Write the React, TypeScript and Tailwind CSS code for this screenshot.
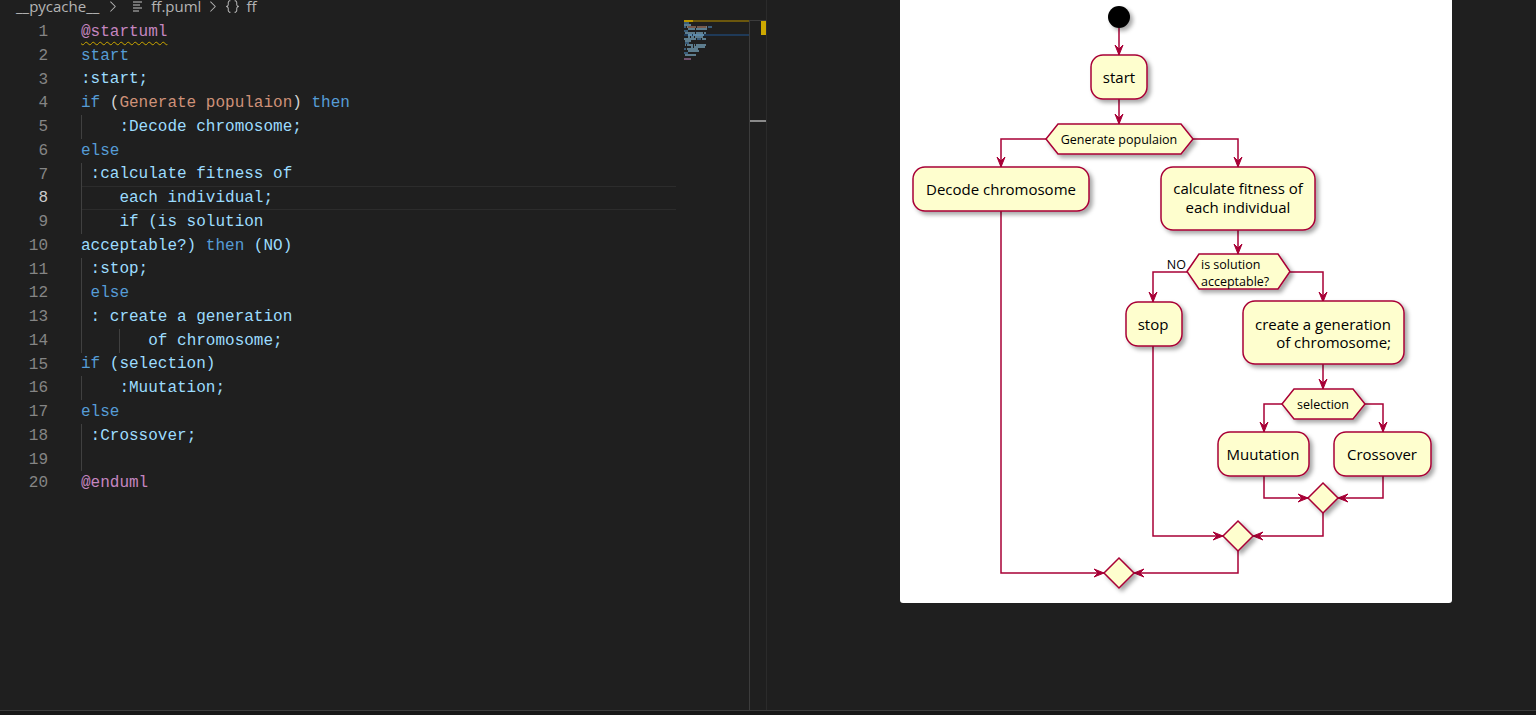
import { VscChevronRight, VscSymbolNamespace } from "react-icons/vsc"

const C = { kw: "#569cd6", lt: "#9cdcfe", pk: "#c586c0", or: "#ce9178", df: "#d4d4d4" }

type Line = { indent: number; tokens: [string, string][]; guide?: boolean; squiggle?: boolean }

const lines: Line[] = [
  { indent: 0, tokens: [["@startuml", C.pk]], squiggle: true },
  { indent: 0, tokens: [["start", C.kw]] },
  { indent: 0, tokens: [[":start;", C.lt]] },
  { indent: 0, tokens: [["if", C.kw], [" (", C.df], ["Generate populaion", C.or], [")", C.df], [" then", C.kw]] },
  { indent: 4, tokens: [[":Decode chromosome;", C.lt]] },
  { indent: 0, tokens: [["else", C.kw]] },
  { indent: 1, tokens: [[":calculate fitness of", C.lt]] },
  { indent: 4, tokens: [["each individual;", C.lt]] },
  { indent: 4, tokens: [["if (is solution", C.lt]] },
  { indent: 0, tokens: [["acceptable?)", C.lt], [" then", C.kw], [" (NO)", C.lt]] },
  { indent: 1, tokens: [[":stop;", C.lt]] },
  { indent: 1, tokens: [["else", C.kw]] },
  { indent: 1, tokens: [[": create a generation", C.lt]] },
  { indent: 7, tokens: [["of chromosome;", C.lt]] },
  { indent: 0, tokens: [["if", C.kw], [" (selection)", C.lt]] },
  { indent: 4, tokens: [[":Muutation;", C.lt]] },
  { indent: 0, tokens: [["else", C.kw]] },
  { indent: 1, tokens: [[":Crossover;", C.lt]] },
  { indent: 1, tokens: [], guide: true },
  { indent: 0, tokens: [["@enduml", C.pk]] },
]

const ACTIVE = 8

function chunks(n: number) {
  const out: number[] = []
  for (let i = 0; i < n; i += 4) out.push(Math.min(4, n - i))
  return out
}

function CodeLine({ line, n }: { line: Line; n: number }) {
  const active = n === ACTIVE
  return (
    <div className="flex h-[23.75px] items-stretch">
      <div className={`w-[48px] text-right ${active ? "text-[#cccccc]" : "text-[#858585]"}`}>{n}</div>
      <div className="w-[33px]" />
      <div
        className={`flex w-[595px] items-stretch whitespace-pre ${
          active ? "shadow-[inset_0_1px_0_#2c2c2c,inset_0_-1px_0_#2c2c2c]" : ""
        }`}
      >
        {chunks(line.indent).map((s, i) => (
          <span key={i} className="shadow-[inset_1px_0_0_#404040]">
            {" ".repeat(s)}
          </span>
        ))}
        <span className="self-center">
          {line.tokens.map(([t, c], i) => (
            <span
              key={i}
              style={{ color: c }}
              className={line.squiggle ? "underline decoration-wavy decoration-[#cca700] decoration-1 underline-offset-[5px]" : ""}
            >
              {t}
            </span>
          ))}
        </span>
      </div>
    </div>
  )
}

function MiniRow({ line, n }: { line: Line; n: number }) {
  const parts: { w: number; c: string; gap?: boolean }[] = []
  if (line.indent) parts.push({ w: line.indent, c: "", gap: true })
  line.tokens.forEach(([t, c]) => {
    t.split(/( +)/).forEach((seg) => {
      if (!seg) return
      parts.push({ w: seg.length, c, gap: seg.trim() === "" })
    })
  })
  return (
    <div className={`flex h-[2px] items-stretch ${n === ACTIVE ? "bg-[#1f3a58]" : ""}`}>
      {parts.map((p, i) => (
        <div
          key={i}
          className="opacity-50"
          style={{ width: p.w, backgroundColor: p.gap ? "transparent" : p.c }}
        />
      ))}
    </div>
  )
}

const RED = "#a80036"
const FILL = "#fefece"
const TF = "'Open Sans', 'DejaVu Sans', sans-serif"

function Head({ x, y, d }: { x: number; y: number; d: "down" | "left" | "right" }) {
  const pts =
    d === "down"
      ? `${x - 4},${y - 10} ${x},${y} ${x + 4},${y - 10} ${x},${y - 6}`
      : d === "right"
      ? `${x - 10},${y - 4} ${x},${y} ${x - 10},${y + 4} ${x - 6},${y}`
      : `${x + 10},${y - 4} ${x},${y} ${x + 10},${y + 4} ${x + 6},${y}`
  return <polygon points={pts} fill={RED} stroke={RED} strokeWidth={1} />
}

function Box({ x, y, w, h }: { x: number; y: number; w: number; h: number }) {
  return <rect x={x} y={y} width={w} height={h} rx={12} fill={FILL} stroke={RED} strokeWidth={1.5} filter="url(#sh)" />
}

function Hex({ x1, x2, y1, y2 }: { x1: number; x2: number; y1: number; y2: number }) {
  const m = (y1 + y2) / 2
  return (
    <polygon
      points={`${x1},${m} ${x1 + 12},${y1} ${x2 - 12},${y1} ${x2},${m} ${x2 - 12},${y2} ${x1 + 12},${y2}`}
      fill={FILL}
      stroke={RED}
      strokeWidth={1.5}
      filter="url(#sh)"
    />
  )
}

function Diamond({ cx, cy }: { cx: number; cy: number }) {
  return (
    <polygon
      points={`${cx},${cy - 15} ${cx + 15},${cy} ${cx},${cy + 15} ${cx - 15},${cy}`}
      fill={FILL}
      stroke={RED}
      strokeWidth={1.5}
      filter="url(#sh)"
    />
  )
}

function Diagram() {
  const ln = { fill: "none", stroke: RED, strokeWidth: 1.5 }
  return (
    <svg width={552} height={603} viewBox="0 0 552 603">
      <defs>
        <filter id="sh" x="-20%" y="-20%" width="150%" height="150%">
          <feDropShadow dx="3" dy="3" stdDeviation="2" floodColor="#000" floodOpacity="0.35" />
        </filter>
      </defs>
      {/* connectors */}
      <polyline points="219,28 219,55" {...ln} />
      <Head x={219} y={55} d="down" />
      <polyline points="219,99 219,124" {...ln} />
      <Head x={219} y={124} d="down" />
      <polyline points="146,139 101,139 101,167" {...ln} />
      <Head x={101} y={167} d="down" />
      <polyline points="293,139 338,139 338,167" {...ln} />
      <Head x={338} y={167} d="down" />
      <polyline points="338,230 338,254" {...ln} />
      <Head x={338} y={254} d="down" />
      <polyline points="287,272 253,272 253,302" {...ln} />
      <Head x={253} y={302} d="down" />
      <polyline points="390,272 423,272 423,302" {...ln} />
      <Head x={423} y={302} d="down" />
      <polyline points="423,364 423,389" {...ln} />
      <Head x={423} y={389} d="down" />
      <polyline points="382,404 364,404 364,432" {...ln} />
      <Head x={364} y={432} d="down" />
      <polyline points="465,404 483,404 483,432" {...ln} />
      <Head x={483} y={432} d="down" />
      <polyline points="364,476 364,498 408,498" {...ln} />
      <Head x={408} y={498} d="right" />
      <polyline points="483,476 483,498 438,498" {...ln} />
      <Head x={438} y={498} d="left" />
      <polyline points="423,513 423,536 353,536" {...ln} />
      <Head x={353} y={536} d="left" />
      <polyline points="253,346 253,536 323,536" {...ln} />
      <Head x={323} y={536} d="right" />
      <polyline points="338,551 338,573 234,573" {...ln} />
      <Head x={234} y={573} d="left" />
      <polyline points="101,211 101,573 204,573" {...ln} />
      <Head x={204} y={573} d="right" />

      {/* nodes */}
      <circle cx={219} cy={17} r={11} fill="#000" filter="url(#sh)" />
      <Box x={191} y={55} w={56} h={44} />
      <Hex x1={146} x2={293} y1={124} y2={154} />
      <Box x={13} y={167} w={176} h={44} />
      <Box x={261} y={167} w={154} h={63} />
      <Hex x1={287} x2={390} y1={254} y2={289} />
      <Box x={226} y={302} w={56} h={44} />
      <Box x={343} y={301} w={161} h={63} />
      <Hex x1={382} x2={465} y1={389} y2={419} />
      <Box x={318} y={432} w={91} h={44} />
      <Box x={434} y={432} w={97} h={44} />
      <Diamond cx={423} cy={498} />
      <Diamond cx={338} cy={536} />
      <Diamond cx={219} cy={573} />

      {/* labels */}
      <g fontFamily={TF} fill="#000" fontSize={15}>
        <text x={219} y={83} textAnchor="middle">start</text>
        <text x={101} y={195} textAnchor="middle">Decode chromosome</text>
        <text x={338} y={194} textAnchor="middle">calculate fitness of</text>
        <text x={338} y={213} textAnchor="middle">each individual</text>
        <text x={253} y={330} textAnchor="middle">stop</text>
        <text x={491} y={330} textAnchor="end">create a generation</text>
        <text x={491} y={348} textAnchor="end">of chromosome;</text>
        <text x={363} y={460} textAnchor="middle">Muutation</text>
        <text x={482} y={460} textAnchor="middle">Crossover</text>
      </g>
      <g fontFamily={TF} fill="#000" fontSize={12.5}>
        <text x={219} y={144} textAnchor="middle">Generate populaion</text>
        <text x={301} y={269}>is solution</text>
        <text x={301} y={286}>acceptable?</text>
        <text x={286} y={269} textAnchor="end">NO</text>
        <text x={423} y={409} textAnchor="middle">selection</text>
      </g>
    </svg>
  )
}

function FileLinesIcon() {
  return (
    <svg width="10" height="11" viewBox="0 0 10 11" className="text-[#c5c5c5]">
      <path d="M0 1h9M0 4h7M0 7h9M0 10h6" stroke="currentColor" strokeWidth="1.2" />
    </svg>
  )
}

export default function App() {
  return (
    <div className="flex h-[715px] w-[1536px] flex-col overflow-hidden bg-[#1f1f1f]">
      <div className="flex h-[710px]">
        {/* Editor */}
        <div className="flex w-[767px] flex-col border-r border-[#2b2b2b]">
          {/* Breadcrumbs */}
          <div className="h-[20px] overflow-hidden">
            <div className="-mt-[3px] flex items-center pl-[16px] text-[15px] leading-[18px] text-[#b4b4b4] [font-family:'Open_Sans',sans-serif]">
              <span>__pycache__</span>
              <VscChevronRight className="ml-[5px] h-[17px] w-[17px]" />
              <span className="ml-[12px]"><FileLinesIcon /></span>
              <span className="ml-[8px]">ff.puml</span>
              <VscChevronRight className="ml-[3px] h-[17px] w-[17px]" />
              <VscSymbolNamespace className="ml-[3px] h-[17px] w-[17px]" />
              <span className="ml-[5px]">ff</span>
            </div>
          </div>

          <div className="flex flex-1">
            {/* Code */}
            <div className="w-[684px] text-[16px] [font-family:'Liberation_Mono',monospace]">
              {lines.map((l, i) => (
                <CodeLine key={i} line={l} n={i + 1} />
              ))}
            </div>

            {/* Minimap */}
            <div className="w-[65px]">
              <div className="flex h-[2px] bg-[#6b570d]">
                <div className="w-[9px] bg-[#b89600]" />
              </div>
              {lines.slice(1).map((l, i) => (
                <MiniRow key={i} line={l} n={i + 2} />
              ))}
            </div>

            {/* Overview ruler */}
            <div className="flex w-[17px] flex-col border-t border-l border-[#3c3c3c]">
              <div className="h-[14px] w-[5px] self-end bg-[#cca700]" />
              <div className="mt-[85px] h-[2px] bg-[#8a8a8a]" />
            </div>
          </div>
        </div>

        {/* Preview */}
        <div className="flex-1">
          <div className="ml-[133px] h-[603px] w-[552px] rounded-b-[3px] bg-white">
            <Diagram />
          </div>
        </div>
      </div>
      <div className="h-[5px] border-t border-[#3c3c3c] bg-[#181818]" />
    </div>
  )
}
